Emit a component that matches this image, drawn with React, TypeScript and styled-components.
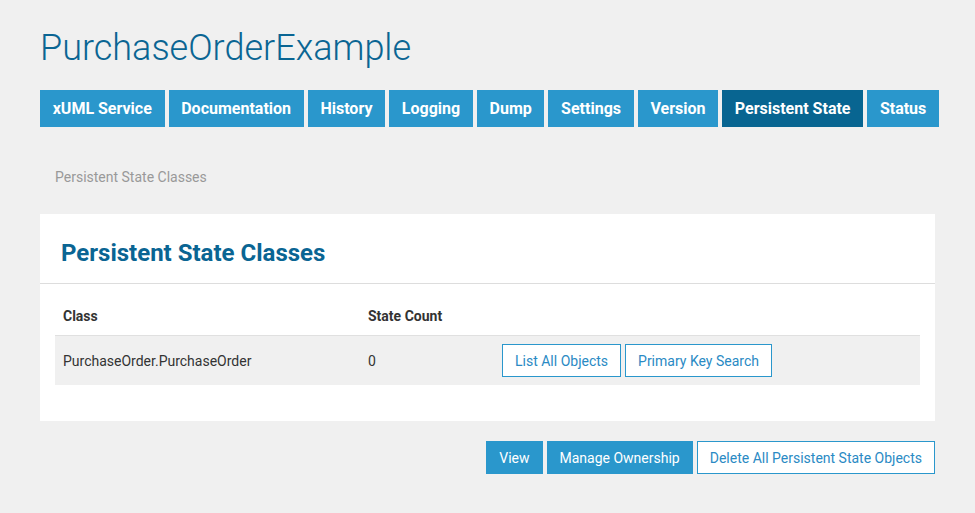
import React from 'react'
import styled, { createGlobalStyle } from 'styled-components'

const GlobalStyle = createGlobalStyle`
  html, body {
    margin: 0;
    padding: 0;
    background: #f0f0f0;
    font-family: Roboto, "Liberation Sans", Arial, sans-serif;
    color: #333;
  }
`

const Page = styled.div`
  padding: 0 40px;
`

const Title = styled.h1`
  margin: 0;
  padding-top: 26px;
  font-size: 36px;
  line-height: 44px;
  font-weight: 300;
  color: #0a6593;
`

const Nav = styled.nav`
  display: flex;
  gap: 4px;
  margin-top: 20px;
`

const Tab = styled.a<{ $active?: boolean }>`
  display: flex;
  flex-shrink: 0;
  align-items: center;
  height: 37px;
  padding: 0 12.7px;
  font-size: 16px;
  font-weight: 700;
  white-space: nowrap;
  color: #fff;
  text-decoration: none;
  background: ${(p) => (p.$active ? '#086591' : '#2a97cc')};
`

const Breadcrumb = styled.div`
  margin-top: 42px;
  padding-left: 15px;
  font-size: 14px;
  line-height: 17px;
  color: #999;
`

const Card = styled.section`
  margin-top: 28px;
  background: #fff;
`

const CardHeader = styled.h2`
  margin: 0;
  padding: 9px 21px 0;
  height: 60px;
  display: flex;
  align-items: center;
  font-size: 24px;
  font-weight: 700;
  color: #0a6593;
  border-bottom: 1px solid #ddd;
`

const CardBody = styled.div`
  padding: 13px 15px 36px;
`

const Table = styled.table`
  width: 100%;
  table-layout: fixed;
  border-collapse: collapse;
  font-size: 14px;
`

const Th = styled.th<{ $width?: number }>`
  text-align: left;
  font-weight: 700;
  color: #333;
  padding: 8px 8px 8px;
  height: 22px;
  border-bottom: 1px solid #e0e0e0;
  width: ${(p) => (p.$width ? `${p.$width}px` : 'auto')};
`

const Row = styled.tr`
  background: #f0f0f0;
`

const Td = styled.td`
  padding: 0 8px;
  height: 49px;
  color: #333;
`

const ButtonGroup = styled.div<{ $right?: boolean }>`
  display: flex;
  gap: 4px;
  justify-content: ${(p) => (p.$right ? 'flex-end' : 'flex-start')};
`

const Button = styled.button<{ $outline?: boolean }>`
  height: 33px;
  padding: 0 12px;
  font-family: inherit;
  font-size: 14px;
  white-space: nowrap;
  border: 1px solid #2a97cc;
  cursor: pointer;
  color: ${(p) => (p.$outline ? '#2a8ac4' : '#fff')};
  background: ${(p) => (p.$outline ? '#fff' : '#2a97cc')};
`

const Footer = styled.div`
  margin-top: 20px;
`

const tabs = [
  'xUML Service',
  'Documentation',
  'History',
  'Logging',
  'Dump',
  'Settings',
  'Version',
  'Persistent State',
  'Status',
]

export default function App() {
  return (
    <Page>
      <GlobalStyle />
      <Title>PurchaseOrderExample</Title>
      <Nav>
        {tabs.map((t) => (
          <Tab key={t} $active={t === 'Persistent State'}>
            {t}
          </Tab>
        ))}
      </Nav>
      <Breadcrumb>Persistent State Classes</Breadcrumb>
      <Card>
        <CardHeader>Persistent State Classes</CardHeader>
        <CardBody>
          <Table>
            <thead>
              <tr>
                <Th $width={289}>Class</Th>
                <Th $width={118}>State Count</Th>
                <Th />
              </tr>
            </thead>
            <tbody>
              <Row>
                <Td>PurchaseOrder.PurchaseOrder</Td>
                <Td>0</Td>
                <Td>
                  <ButtonGroup>
                    <Button $outline>List All Objects</Button>
                    <Button $outline>Primary Key Search</Button>
                  </ButtonGroup>
                </Td>
              </Row>
            </tbody>
          </Table>
        </CardBody>
      </Card>
      <Footer>
        <ButtonGroup $right>
          <Button>View</Button>
          <Button>Manage Ownership</Button>
          <Button $outline>Delete All Persistent State Objects</Button>
        </ButtonGroup>
      </Footer>
    </Page>
  )
}
